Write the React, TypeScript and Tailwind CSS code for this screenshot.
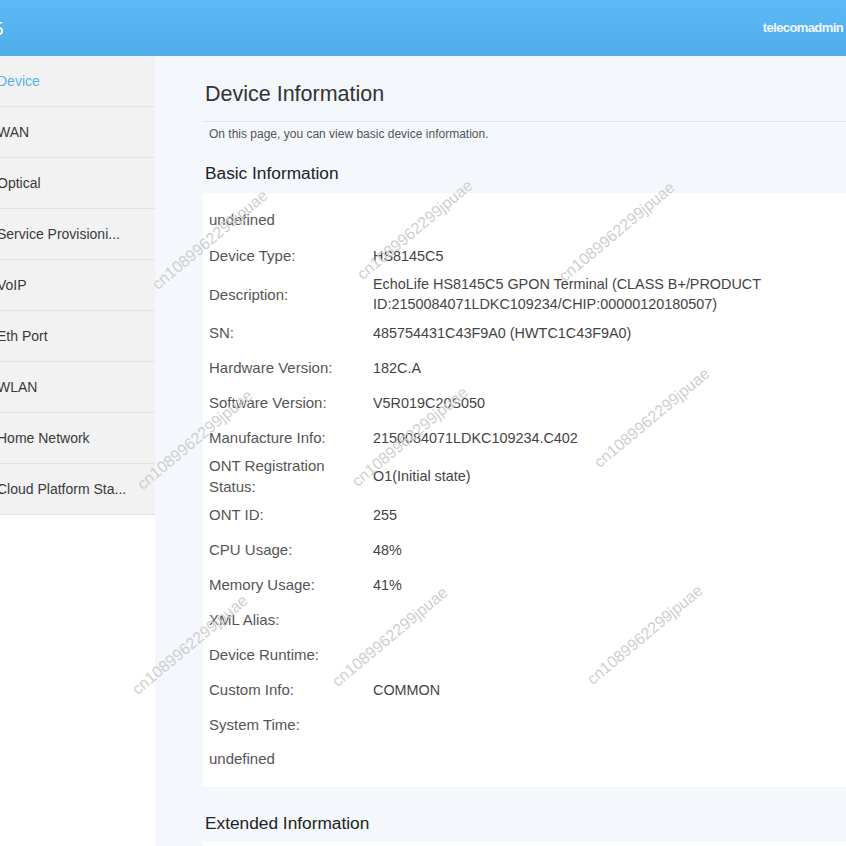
import React from "react";

const MENU = [
  "Device",
  "WAN",
  "Optical",
  "Service Provisioni...",
  "VoIP",
  "Eth Port",
  "WLAN",
  "Home Network",
  "Cloud Platform Sta...",
];

type Row = { label: string; value?: string; tall?: boolean; full?: boolean };

const ROWS: Row[] = [
  { label: "undefined", full: true },
  { label: "Device Type:", value: "HS8145C5" },
  {
    label: "Description:",
    value:
      "EchoLife HS8145C5 GPON Terminal (CLASS B+/PRODUCT ID:2150084071LDKC109234/CHIP:00000120180507)",
    tall: true,
  },
  { label: "SN:", value: "485754431C43F9A0 (HWTC1C43F9A0)" },
  { label: "Hardware Version:", value: "182C.A" },
  { label: "Software Version:", value: "V5R019C20S050" },
  { label: "Manufacture Info:", value: "2150084071LDKC109234.C402" },
  { label: "ONT Registration Status:", value: "O1(Initial state)", tall: true },
  { label: "ONT ID:", value: "255" },
  { label: "CPU Usage:", value: "48%" },
  { label: "Memory Usage:", value: "41%" },
  { label: "XML Alias:" },
  { label: "Device Runtime:" },
  { label: "Custom Info:", value: "COMMON" },
  { label: "System Time:" },
  { label: "undefined", full: true },
];

// watermark centres, as they sit on the screenshot
const MARKS = [
  [210, 240],
  [415, 230],
  [617, 232],
  [195, 440],
  [410, 437],
  [652, 418],
  [190, 645],
  [390, 637],
  [645, 635],
];

export default function App() {
  return (
    <div
      className="relative h-[846px] w-[846px] overflow-hidden bg-white"
      style={{ fontFamily: '"Liberation Sans", Arial, sans-serif' }}
    >
      <header className="flex h-[56px] items-center justify-between bg-gradient-to-b from-[#5dbaf6] to-[#50ace9] text-white">
        <span className="-ml-[7px] text-[19px] leading-none">5</span>
        <span className="mr-[3px] text-[13px] font-bold tracking-[-0.6px] text-[#f1f8ff]">
          telecomadmin
        </span>
      </header>

      <div className="flex">
        <nav className="w-[155px] shrink-0">
          {MENU.map((item, i) => (
            <div
              key={item}
              className={`flex h-[51px] items-center border-b border-[#e3e3e3] bg-[#f2f2f2] text-[14px] ${
                i === 0 ? "text-[#5ab3e2]" : "text-[#3a3a3a]"
              }`}
            >
              <span className="-ml-[3px] whitespace-nowrap">{item}</span>
            </div>
          ))}
        </nav>

        <main className="min-h-[790px] flex-1 bg-[#f4f7fc] pl-[48px] pt-[24px]">
          <div className="border-b border-[#dfe2e7] pb-[13px] pl-[2px] text-[21.5px] leading-[28px] text-[#333]">
            Device Information
          </div>
          <p className="mt-[4px] pl-[6px] text-[12px] leading-[16px] text-[#555]">
            On this page, you can view basic device information.
          </p>

          <h2 className="mt-[20px] pl-[2px] text-[17.3px] leading-[22px] text-[#222]">
            Basic Information
          </h2>

          <div className="mt-[9px] bg-white py-[10px] pl-[6px] text-[#555]">
            {ROWS.map((row, i) => (
              <div
                key={i}
                className={`flex items-center text-[15px] ${row.tall ? "h-[42px]" : "h-[35px]"}`}
              >
                {row.full ? (
                  <span>{row.label}</span>
                ) : (
                  <>
                    <span className="w-[164px] shrink-0 pr-[14px] leading-[21px]">
                      {row.label}
                    </span>
                    <span className="max-w-[400px] text-[14.4px] leading-[20px] text-[#444]">
                      {row.value}
                    </span>
                  </>
                )}
              </div>
            ))}
          </div>

          <h2 className="mt-[25px] pl-[2px] text-[17.3px] leading-[22px] text-[#222]">
            Extended Information
          </h2>
          <div className="mt-[8px] h-[40px] bg-white" />
        </main>
      </div>

      {MARKS.map(([x, y], i) => (
        <span
          key={i}
          className="pointer-events-none absolute -translate-x-1/2 -translate-y-1/2 -rotate-[40deg] whitespace-nowrap text-[16px] text-[#cfcfcf]"
          style={{ left: x, top: y }}
        >
          cn1089962299jpuae
        </span>
      ))}
    </div>
  );
}
